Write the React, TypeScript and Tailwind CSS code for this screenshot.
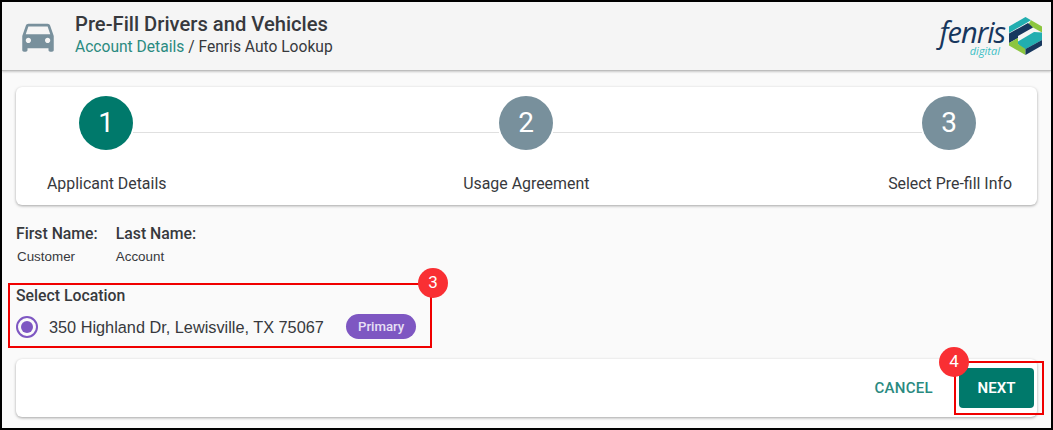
const font = "font-['Roboto',sans-serif]"
const arial = "font-['Liberation_Sans',sans-serif]"

function CarIcon() {
  return (
    <svg viewBox="0 0 24 24" className="h-[42px] w-[42px] shrink-0 fill-[#78909c]">
      <path d="M18.92 6.01C18.72 5.42 18.16 5 17.5 5h-11c-.66 0-1.21.42-1.42 1.01L3 12v8c0 .55.45 1 1 1h1c.55 0 1-.45 1-1v-1h12v1c0 .55.45 1 1 1h1c.55 0 1-.45 1-1v-8l-2.08-5.99zM6.5 16c-.83 0-1.5-.67-1.5-1.5S5.67 13 6.5 13s1.5.67 1.5 1.5S7.33 16 6.5 16zm11 0c-.83 0-1.5-.67-1.5-1.5s.67-1.5 1.5-1.5 1.5.67 1.5 1.5-.67 1.5-1.5 1.5zM5 11l1.5-4.5h11L19 11H5z" />
    </svg>
  )
}

function FenrisLogo() {
  return (
    <div className="flex items-center gap-[4px]">
      <div className="mt-[2px] flex flex-col items-end">
        <div className="h-[28px] font-['Open_Sans',sans-serif] text-[29px] leading-[28px] tracking-[-1px] text-[#17375e] italic">fenris</div>
        <div className="mr-[5px] h-[10px] font-['Open_Sans',sans-serif] text-[11px] leading-[10px] text-[#3cc0c5] italic">digital</div>
      </div>
      <svg viewBox="0 0 33 38" className="h-[38px] w-[33px]">
        <path d="M0 9.5 16.5 0 22 3.2 0 16Z" fill="#22aeb0" />
        <path d="M16.5 0 33 9.5V15.5L24 10.5 19 8 22 3.2Z" fill="#8cc63f" />
        <path d="M0 16.5 19 6 24 10.5 9 19V21L0 26Z" fill="#17375e" />
        <path d="M33 15.5V23L14 33.5 9 27 9 24.5 25 15Z" fill="#22aeb0" />
        <path d="M0 26 9 21V27L16.5 32 16.5 38 0 28.5Z" fill="#8cc63f" />
        <path d="M33 23V28.5L16.5 38V32Z" fill="#17375e" />
      </svg>
    </div>
  )
}

function StepCircle({ n, active }: { n: number; active?: boolean }) {
  return (
    <div className={`flex h-[54px] w-[54px] shrink-0 items-center justify-center rounded-full text-[28px] text-white ${active ? 'bg-[#00796b]' : 'bg-[#78909c]'}`}>
      {n}
    </div>
  )
}

function Badge({ n, className }: { n: number; className: string }) {
  return (
    <span className={`absolute flex h-[30px] w-[30px] items-center justify-center rounded-full bg-[#f92f33] text-[17px] text-white ${className}`}>
      {n}
    </span>
  )
}

export default function App() {
  return (
    <div className={`${font} relative h-[430px] w-[1053px] overflow-hidden border-2 border-black bg-[#fafafa] text-[#37393d]`}>
      <header className="flex h-[69px] items-center justify-between border-b border-[#bdbdbd] bg-[#f5f5f5] pr-[9px] pl-[15px] shadow-[0_1px_2px_rgba(0,0,0,0.2)]">
        <div className="flex items-center gap-[16px]">
          <CarIcon />
          <div className="-mt-[3px]">
            <div className="text-[20.2px] leading-[25px] font-medium">Pre-Fill Drivers and Vehicles</div>
            <div className="text-[15.6px] leading-[20px]">
              <span className="text-[#2a8a80]">Account Details</span> / Fenris Auto Lookup
            </div>
          </div>
        </div>
        <FenrisLogo />
      </header>

      <section className="mx-[14px] mt-[16px] h-[118px] rounded-[6px] bg-white pt-[9px] shadow-[0_1px_3px_rgba(0,0,0,0.35)]">
        <div className="flex items-start pr-[61px] pl-[63px]">
          <StepCircle n={1} active />
          <div className="mt-[36px] h-px w-[366px] bg-[#e0e0e0]" />
          <StepCircle n={2} />
          <div className="mt-[36px] h-px flex-1 bg-[#e0e0e0]" />
          <StepCircle n={3} />
        </div>
        <div className="mt-[24px] flex justify-between pr-[25px] pl-[31px] text-[15.9px] leading-[20px]">
          <span>Applicant Details</span>
          <span className="mr-[2px]">Usage Agreement</span>
          <span>Select Pre-fill Info</span>
        </div>
      </section>

      <section className="mt-[19px] flex gap-[18px] pl-[14px]">
        <div>
          <div className="text-[15.8px] leading-[20px] font-medium">First Name:</div>
          <div className={`${arial} mt-[4px] pl-px text-[13.4px] leading-[18px]`}>Customer</div>
        </div>
        <div>
          <div className="text-[15.8px] leading-[20px] font-medium">Last Name:</div>
          <div className={`${arial} mt-[4px] text-[13.4px] leading-[18px]`}>Account</div>
        </div>
      </section>

      <section className="mt-[20px] pl-[14px]">
        <div className="text-[15.8px] leading-[20px] font-medium">Select Location</div>
        <div className="mt-[8px] flex items-center">
          <span className="flex h-[22px] w-[22px] items-center justify-center rounded-full border-2 border-[#7e57c2]">
            <span className="h-[12px] w-[12px] rounded-full bg-[#7e57c2]" />
          </span>
          <span className={`${arial} ml-[11px] w-[275px] text-[16.3px] leading-[24px] whitespace-nowrap`}>350 Highland Dr, Lewisville, TX 75067</span>
          <span className="ml-[22px] flex h-[25px] items-center rounded-full bg-[#7e57c2] px-[12px] text-[13.2px] font-medium text-[#e8e0f5]">Primary</span>
        </div>
      </section>

      <section className="mx-[14px] mt-[20px] flex h-[58px] items-center justify-end gap-[26px] rounded-[6px] bg-white pr-[3px] shadow-[0_1px_3px_rgba(0,0,0,0.35)]">
        <span className="text-[15px] font-medium tracking-[0.3px] text-[#2a8a80]">CANCEL</span>
        <span className="flex h-[40px] w-[75px] items-center justify-center rounded-[4px] bg-[#00796b] text-[15px] font-semibold text-white">NEXT</span>
      </section>

      <div className="absolute top-[281px] left-[6px] h-[65px] w-[424px] border-2 border-[#f00000]" />
      <Badge n={3} className="top-[266px] left-[416px]" />
      <div className="absolute top-[359px] left-[952px] h-[54px] w-[90px] border-2 border-[#f00000]" />
      <Badge n={4} className="top-[345px] left-[937px]" />
    </div>
  )
}
